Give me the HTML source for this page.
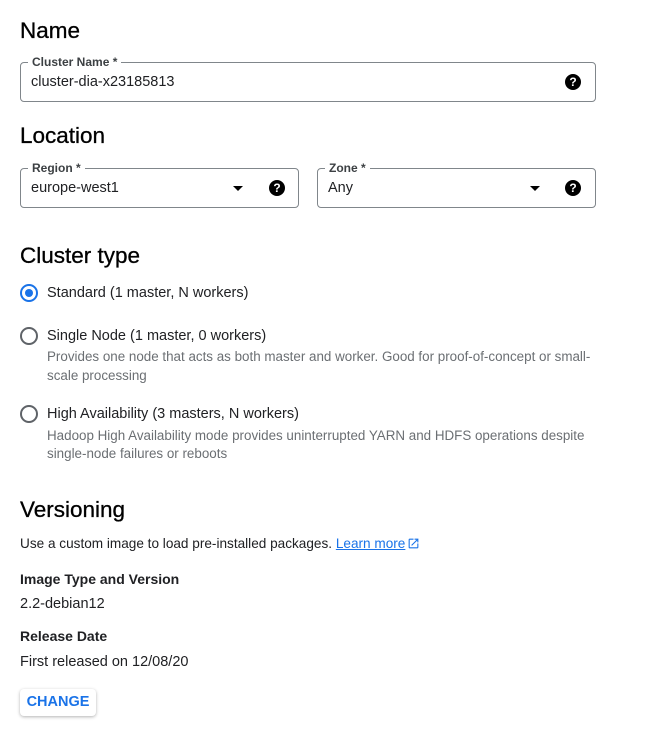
<!DOCTYPE html>
<html><head><meta charset="utf-8"><style>
body{margin:0;width:650px;height:730px;background:#fff;font-family:"Liberation Sans",sans-serif;color:#202124;position:relative;overflow:hidden}
.a{position:absolute;white-space:nowrap;line-height:1}
h2{position:absolute;margin:0;font-weight:400;font-size:22.5px;line-height:1;left:20px;color:#000;-webkit-text-stroke:0.3px #000}
.box{position:absolute;border:1px solid #80868b;border-radius:4px;height:40px;box-sizing:border-box}
.lbl{position:absolute;top:-7px;left:7px;background:#fff;padding:0 4px;font-size:12px;line-height:13px;font-weight:bold;color:#3c4043}
.val{position:absolute;left:10px;top:12px;font-size:14.5px;line-height:14px;color:#202124}
.q{position:absolute;top:11px;width:16px;height:16px;border-radius:50%;background:#000;color:#fff;font-size:12px;font-weight:bold;text-align:center;line-height:16px}
.tri{position:absolute;top:17px;width:0;height:0;border-left:5px solid transparent;border-right:5px solid transparent;border-top:5px solid #000}
.rad{position:absolute;left:20px;width:18px;height:18px;border:2px solid #5f6368;border-radius:50%;box-sizing:border-box}
.rl{font-size:14.5px;left:47px}
.rd{font-size:13.4px;left:47px;color:#6b6f73}
</style></head><body>
<h2 style="top:20px">Name</h2>
<div class="box" style="left:20px;top:62px;width:576px"><span class="lbl">Cluster Name *</span><span class="val">cluster-dia-x23185813</span><span class="q" style="right:14px">?</span></div>
<h2 style="top:125px">Location</h2>
<div class="box" style="left:20px;top:168px;width:279px"><span class="lbl">Region *</span><span class="val">europe-west1</span><span class="tri" style="right:55px"></span><span class="q" style="right:13px">?</span></div>
<div class="box" style="left:317px;top:168px;width:279px"><span class="lbl">Zone *</span><span class="val">Any</span><span class="tri" style="right:55px"></span><span class="q" style="right:14px">?</span></div>
<h2 style="top:245px">Cluster type</h2>
<div class="rad" style="top:284px;border-color:#1a73e8"><div style="position:absolute;left:3px;top:3px;width:8px;height:8px;border-radius:50%;background:#1a73e8"></div></div>
<div class="a rl" style="top:286px">Standard (1 master, N workers)</div>
<div class="rad" style="top:327px"></div>
<div class="a rl" style="top:329px">Single Node (1 master, 0 workers)</div>
<div class="a rd" style="top:350px">Provides one node that acts as both master and worker. Good for proof-of-concept or small-</div>
<div class="a rd" style="top:369px">scale processing</div>
<div class="rad" style="top:405px"></div>
<div class="a rl" style="top:407px">High Availability (3 masters, N workers)</div>
<div class="a rd" style="top:429px">Hadoop High Availability mode provides uninterrupted YARN and HDFS operations despite</div>
<div class="a rd" style="top:447px">single-node failures or reboots</div>
<h2 style="top:499px">Versioning</h2>
<div class="a" style="left:20px;top:537px;font-size:13.6px">Use a custom image to load pre-installed packages. <span style="color:#1a73e8;text-decoration:underline">Learn more</span><svg width="13" height="13" viewBox="0 0 24 24" style="vertical-align:-2px;margin-left:2px"><path d="M19 19H5V5h7V3H5a2 2 0 0 0-2 2v14a2 2 0 0 0 2 2h14a2 2 0 0 0 2-2v-7h-2v7zM14 3v2h3.6l-9.8 9.8 1.4 1.4L19 6.4V10h2V3h-7z" fill="#1a73e8"/></svg></div>
<div class="a" style="left:20px;top:572px;font-size:14px;font-weight:bold;color:#202124">Image Type and Version</div>
<div class="a" style="left:20px;top:597px;font-size:14.5px">2.2-debian12</div>
<div class="a" style="left:20px;top:629px;font-size:14px;font-weight:bold">Release Date</div>
<div class="a" style="left:20px;top:655px;font-size:14.5px;width:169px;overflow:hidden">First released on 12/08/2024</div>
<div style="position:absolute;left:20px;top:689px;width:76px;height:27px;border-radius:4px;box-shadow:0 1px 3px rgba(0,0,0,.3);color:#1a73e8;font-weight:bold;font-size:14.5px;text-align:center;line-height:27px">CHANGE</div>
</body></html>
